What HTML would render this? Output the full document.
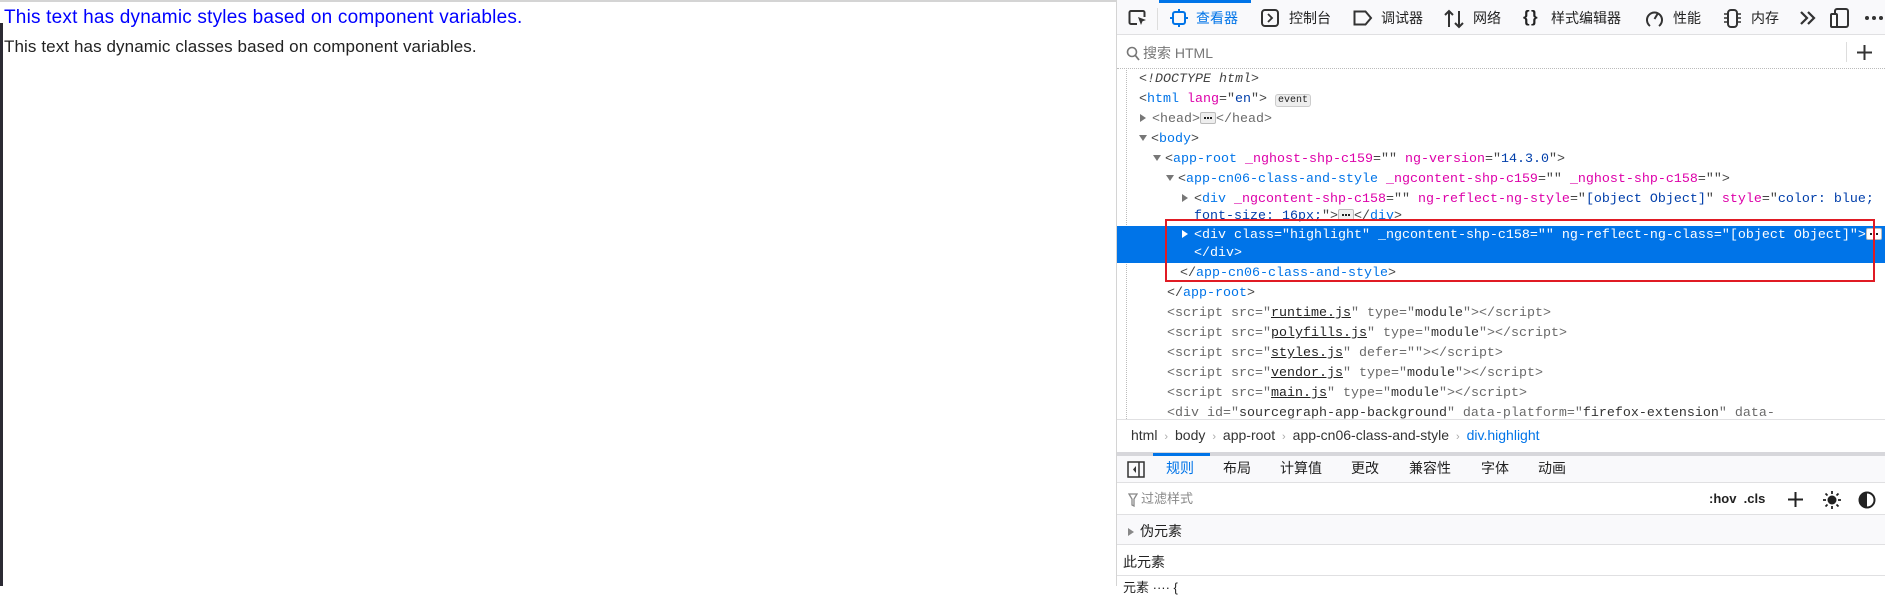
<!DOCTYPE html>
<html><head><meta charset="utf-8"><style>
*{margin:0;padding:0;box-sizing:border-box}
body{width:1885px;height:586px;overflow:hidden;background:#fff;position:relative;font-family:"Liberation Sans","Noto Sans CJK SC",sans-serif}
.a{position:absolute;white-space:nowrap}
.m{font-family:"Liberation Mono","Noto Sans CJK SC",monospace;font-size:13.33px;line-height:20px;color:#444}
.t{color:#0074e8}.n{color:#dd00a9}.v{color:#003eaa}.g{color:#6a6a6a}.u{text-decoration:underline;color:#222}
.ui{font-size:14px;color:#222;line-height:20px}
.dots{display:inline-block;width:16px;height:12px;border:1px solid #bbb;background:#eee;border-radius:2px;vertical-align:middle;position:relative}
.dots::after{content:"";position:absolute;left:3px;top:4px;width:2px;height:2px;background:#222;box-shadow:3px 0 #222,6px 0 #222}
.tri{display:inline-block;width:0;height:0;border-left:6px solid #777;border-top:4px solid transparent;border-bottom:4px solid transparent;margin-right:6px}
.trd{display:inline-block;width:0;height:0;border-top:6px solid #777;border-left:4px solid transparent;border-right:4px solid transparent;margin-right:4px;vertical-align:middle}
</style></head><body>
<div class="a" style="left:0;top:0;width:1116px;height:2px;background:#d4d4d4"></div>
<div class="a" style="left:0;top:23px;width:3px;height:563px;background:#2b2a33"></div>
<div class="a" style="left:4px;top:7px;font-size:19px;color:#0000ff;line-height:22px;letter-spacing:0.2px">This text has dynamic styles based on component variables.</div>
<div class="a" style="left:4px;top:37px;font-size:17px;color:#222;line-height:20px;letter-spacing:0.1px">This text has dynamic classes based on component variables.</div>

<div class="a" style="left:1116px;top:0;width:769px;height:586px;background:#fff;border-left:1px solid #d4d4d4"></div>
<div class="a" style="left:1117px;top:0;width:768px;height:35px;background:#f9f9fb;border-bottom:1px solid #e0e0e2"></div>
<div class="a" style="left:1159px;top:0;width:92px;height:3px;background:#0074e8"></div>
<div class="a" style="left:1157px;top:8px;width:1px;height:22px;background:#ddd"></div>
<svg class="a" style="left:1128px;top:9px" width="20" height="18" viewBox="0 0 20 18"><path d="M9 15H3a1.5 1.5 0 0 1-1.5-1.5v-10A1.5 1.5 0 0 1 3 2h12a1.5 1.5 0 0 1 1.5 1.5V8" fill="none" stroke="#333" stroke-width="2"/><path d="M10 8l8 3-3.5 1.3L13 16z" fill="#333"/></svg>
<svg class="a" style="left:1170px;top:9px" width="18" height="18" viewBox="0 0 18 18"><rect x="3" y="3" width="12" height="12" rx="2" fill="none" stroke="#0074e8" stroke-width="2"/><path d="M9 0v3M9 15v3M0 9h3M15 9h3" stroke="#0074e8" stroke-width="2"/></svg>
<div class="a ui" style="left:1196px;top:8px;color:#0074e8">查看器</div>
<svg class="a" style="left:1261px;top:9px" width="18" height="18"><rect x="1" y="1" width="16" height="16" rx="3" fill="none" stroke="#333" stroke-width="2"/><path d="M7 5l4 4-4 4" fill="none" stroke="#333" stroke-width="1.8"/></svg>
<div class="a ui" style="left:1289px;top:8px">控制台</div>
<svg class="a" style="left:1353px;top:10px" width="20" height="16"><path d="M1.5 1.5h11l5.5 6.5-5.5 6.5h-11z" fill="none" stroke="#333" stroke-width="2"/></svg>
<div class="a ui" style="left:1381px;top:8px">调试器</div>
<svg class="a" style="left:1444px;top:9px" width="20" height="20"><path d="M5 18V2M1 6l4-4 4 4M15 2v16M11 14l4 4 4-4" fill="none" stroke="#333" stroke-width="2"/></svg>
<div class="a ui" style="left:1473px;top:8px">网络</div>
<div class="a ui" style="left:1523px;top:7px;font-size:17px;font-weight:bold">{&#8202;}</div>
<div class="a ui" style="left:1551px;top:8px">样式编辑器</div>
<svg class="a" style="left:1645px;top:9px" width="19" height="19"><path d="M5 17A7.5 7.5 0 1 1 14 17" fill="none" stroke="#333" stroke-width="2"/><path d="M9.5 10l3-5" stroke="#333" stroke-width="2"/></svg>
<div class="a ui" style="left:1673px;top:8px">性能</div>
<svg class="a" style="left:1723px;top:9px" width="19" height="19"><rect x="5" y="1" width="9" height="17" rx="3" fill="none" stroke="#333" stroke-width="2"/><path d="M1 5h4M1 9h4M1 13h4M14 5h4M14 9h4M14 13h4" stroke="#333" stroke-width="1.5"/></svg>
<div class="a ui" style="left:1751px;top:8px">内存</div>
<svg class="a" style="left:1799px;top:11px" width="18" height="14"><path d="M2 1l6 6-6 6M9 1l6 6-6 6" fill="none" stroke="#333" stroke-width="2.2"/></svg>
<svg class="a" style="left:1830px;top:8px" width="20" height="20"><rect x="5" y="1" width="13" height="18" rx="2" fill="none" stroke="#333" stroke-width="2"/><rect x="1" y="6" width="6" height="13" rx="1" fill="#fff" stroke="#333" stroke-width="2"/></svg>
<svg class="a" style="left:1864px;top:15px" width="20" height="6"><circle cx="3" cy="3" r="2" fill="#333"/><circle cx="10" cy="3" r="2" fill="#333"/><circle cx="17" cy="3" r="2" fill="#333"/></svg>
<div class="a" style="left:1117px;top:35px;width:768px;height:34px;background:#fff;border-bottom:1px dotted #bbb"></div>
<svg class="a" style="left:1126px;top:46px" width="14" height="15"><circle cx="6" cy="6" r="4.5" fill="none" stroke="#777" stroke-width="1.6"/><path d="M9 9l4 5" stroke="#777" stroke-width="1.8"/></svg>
<div class="a ui" style="left:1143px;top:43px;color:#777">搜索 HTML</div>
<div class="a" style="left:1846px;top:42px;width:1px;height:20px;background:#ddd"></div>
<svg class="a" style="left:1857px;top:45px" width="15" height="15"><path d="M7.5 0v15M0 7.5h15" stroke="#333" stroke-width="2"/></svg>
<div class="a" style="left:1126px;top:70px;width:0;height:349px;border-left:1px dotted #bbb"></div>
<div class="a" style="left:1117px;top:226px;width:768px;height:37px;background:#0074e8"></div>
<div class="a m" style="left:1139px;top:70px;font-style:italic">&lt;!DOCTYPE html&gt;</div>
<div class="a m" style="left:1139px;top:90px">&lt;<span class="t">html</span> <span class="n">lang</span>="<span class="v">en</span>"&gt; <span style="font-size:10px;border:1px solid #ccc;background:#eee;border-radius:3px;padding:0 2px;color:#222">event</span></div>
<div class="a m g" style="left:1140px;top:110px"><span class="tri"></span>&lt;head&gt;<span class="dots"></span>&lt;/head&gt;</div>
<div class="a m" style="left:1139px;top:130px"><span class="trd"></span>&lt;<span class="t">body</span>&gt;</div>
<div class="a m" style="left:1153px;top:150px"><span class="trd"></span>&lt;<span class="t">app-root</span> <span class="n">_nghost-shp-c159</span>="" <span class="n">ng-version</span>="<span class="v">14.3.0</span>"&gt;</div>
<div class="a m" style="left:1166px;top:170px"><span class="trd"></span>&lt;<span class="t">app-cn06-class-and-style</span> <span class="n">_ngcontent-shp-c159</span>="" <span class="n">_nghost-shp-c158</span>=""&gt;</div>
<div class="a m" style="left:1182px;top:190px"><span class="tri" style="margin-right:6px"></span>&lt;<span class="t">div</span> <span class="n">_ngcontent-shp-c158</span>="" <span class="n">ng-reflect-ng-style</span>="<span class="v">[object Object]</span>" <span class="n">style</span>="<span class="v">color: blue;</span></div>
<div class="a m" style="left:1194px;top:207px"><span class="v">font-size: 16px;</span>"&gt;<span class="dots"></span>&lt;/<span class="t">div</span>&gt;</div>
<div class="a m" style="left:1182px;top:226px;color:#fff"><span class="tri" style="border-left-color:#fff;margin-right:6px"></span>&lt;div class="highlight" _ngcontent-shp-c158="" ng-reflect-ng-class="[object Object]"&gt;<span class="dots" style="background:#fff"></span></div>
<div class="a m" style="left:1194px;top:244px;color:#fff">&lt;/div&gt;</div>
<div class="a m" style="left:1180px;top:264px">&lt;/<span class="t">app-cn06-class-and-style</span>&gt;</div>
<div class="a" style="left:1165px;top:219px;width:710px;height:63px;border:2px solid #e01b24"></div>
<div class="a m" style="left:1167px;top:284px">&lt;/<span class="t">app-root</span>&gt;</div>
<div class="a m g" style="left:1167px;top:304px">&lt;script src="<span class="u">runtime.js</span>" type="<span style="color:#333">module</span>"&gt;&lt;/script&gt;</div>
<div class="a m g" style="left:1167px;top:324px">&lt;script src="<span class="u">polyfills.js</span>" type="<span style="color:#333">module</span>"&gt;&lt;/script&gt;</div>
<div class="a m g" style="left:1167px;top:344px">&lt;script src="<span class="u">styles.js</span>" defer=""&gt;&lt;/script&gt;</div>
<div class="a m g" style="left:1167px;top:364px">&lt;script src="<span class="u">vendor.js</span>" type="<span style="color:#333">module</span>"&gt;&lt;/script&gt;</div>
<div class="a m g" style="left:1167px;top:384px">&lt;script src="<span class="u">main.js</span>" type="<span style="color:#333">module</span>"&gt;&lt;/script&gt;</div>
<div class="a" style="left:1117px;top:404px;width:768px;height:15px;overflow:hidden"><div class="a m g" style="left:50px;top:0">&lt;div id="<span style="color:#333">sourcegraph-app-background</span>" data-platform="<span style="color:#333">firefox-extension</span>" data-</div></div>
<div class="a" style="left:1117px;top:419px;width:768px;height:34px;background:#fff;border-top:1px solid #e0e0e2"></div>
<div class="a ui" style="left:1131px;top:425px;color:#333">html <span style="color:#aaa;font-size:11px">&nbsp;›&nbsp;</span> body <span style="color:#aaa;font-size:11px">&nbsp;›&nbsp;</span> app-root <span style="color:#aaa;font-size:11px">&nbsp;›&nbsp;</span> app-cn06-class-and-style <span style="color:#aaa;font-size:11px">&nbsp;›&nbsp;</span> <span style="color:#0074e8">div.highlight</span></div>
<div class="a" style="left:1117px;top:452px;width:768px;height:4px;background:#d7d7db"></div>
<div class="a" style="left:1117px;top:456px;width:768px;height:27px;background:#f9f9fb;border-bottom:1px solid #e0e0e2"></div>
<div class="a" style="left:1153px;top:453px;width:57px;height:3px;background:#0074e8"></div>
<svg class="a" style="left:1127px;top:461px" width="18" height="17"><rect x="1" y="1" width="16" height="15" fill="none" stroke="#333" stroke-width="1.5"/><path d="M12 1v15" stroke="#333" stroke-width="1.5"/><path d="M9 5l-3 3.5 3 3.5z" fill="#333"/></svg>
<div class="a ui" style="left:1166px;top:458px;color:#0074e8">规则</div>
<div class="a ui" style="left:1223px;top:458px">布局</div>
<div class="a ui" style="left:1280px;top:458px">计算值</div>
<div class="a ui" style="left:1351px;top:458px">更改</div>
<div class="a ui" style="left:1409px;top:458px">兼容性</div>
<div class="a ui" style="left:1481px;top:458px">字体</div>
<div class="a ui" style="left:1538px;top:458px">动画</div>
<div class="a" style="left:1117px;top:483px;width:768px;height:32px;background:#fff;border-bottom:1px solid #e0e0e2"></div>
<svg class="a" style="left:1128px;top:493px" width="10" height="14"><path d="M1 1h8L6 6v7l-2-1V6z" fill="none" stroke="#888" stroke-width="1.3"/></svg>
<div class="a ui" style="left:1141px;top:489px;color:#888;font-size:13px">过滤样式</div>
<div class="a ui" style="left:1709px;top:489px;font-weight:bold;font-size:13px">:hov&nbsp;&nbsp;.cls</div>
<svg class="a" style="left:1788px;top:492px" width="15" height="15"><path d="M7.5 0v15M0 7.5h15" stroke="#222" stroke-width="2"/></svg>
<svg class="a" style="left:1822px;top:490px" width="20" height="20"><circle cx="10" cy="10" r="4.5" fill="#222"/><path d="M10 1v3M10 16v3M1 10h3M16 10h3M3.5 3.5l2 2M14.5 14.5l2 2M16.5 3.5l-2 2M5.5 14.5l-2 2" stroke="#222" stroke-width="1.8"/></svg>
<svg class="a" style="left:1858px;top:491px" width="18" height="18"><circle cx="9" cy="9" r="7.5" fill="none" stroke="#222" stroke-width="2"/><path d="M9 1.5a7.5 7.5 0 0 0 0 15z" fill="#222"/></svg>
<div class="a" style="left:1117px;top:515px;width:768px;height:30px;background:#f9f9fb;border-bottom:1px solid #e0e0e2"></div>
<div class="a ui" style="left:1128px;top:521px"><span class="tri" style="border-left-color:#888"></span>伪元素</div>
<div class="a" style="left:1117px;top:545px;width:768px;height:31px;background:#fff;border-bottom:1px solid #e0e0e2"></div>
<div class="a ui" style="left:1123px;top:552px">此元素</div>
<div class="a ui" style="left:1123px;top:578px;font-size:13px">元素 ···· {</div>
</body></html>
